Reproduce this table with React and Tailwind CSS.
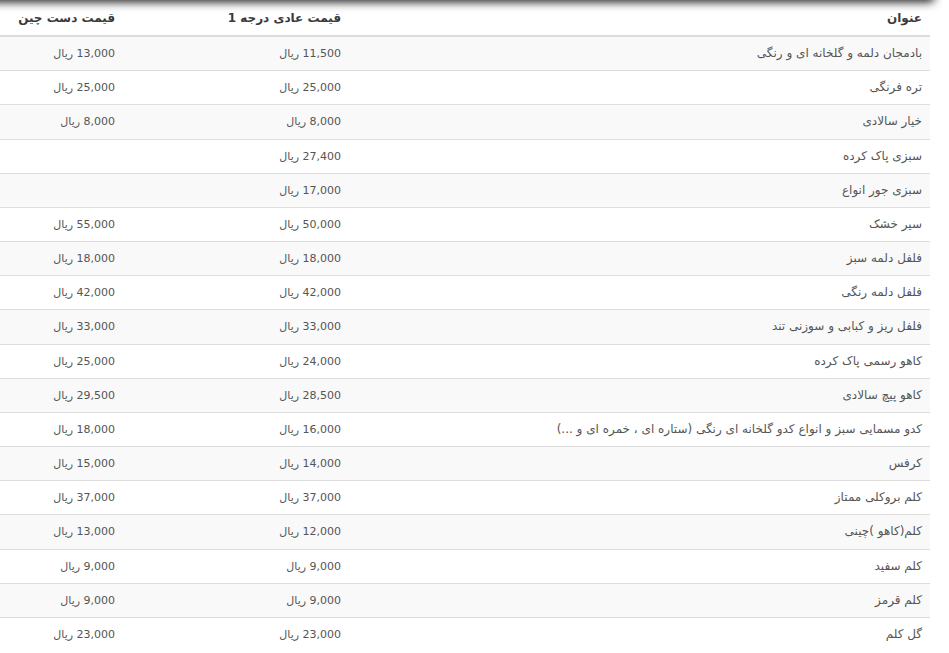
import React from "react";

const rows = [
  ["بادمجان دلمه و گلخانه ای و رنگی", "11,500", "13,000"],
  ["تره فرنگی", "25,000", "25,000"],
  ["خیار سالادی", "8,000", "8,000"],
  ["سبزی پاک کرده", "27,400", ""],
  ["سبزی جور انواع", "17,000", ""],
  ["سیر خشک", "50,000", "55,000"],
  ["فلفل دلمه سبز", "18,000", "18,000"],
  ["فلفل دلمه رنگی", "42,000", "42,000"],
  ["فلفل ریز و کبابی و سوزنی تند", "33,000", "33,000"],
  ["کاهو رسمی پاک کرده", "24,000", "25,000"],
  ["کاهو پیچ سالادی", "28,500", "29,500"],
  ["کدو مسمایی سبز و انواع کدو گلخانه ای رنگی (ستاره ای ، خمره ای و ...)", "16,000", "18,000"],
  ["کرفس", "14,000", "15,000"],
  ["کلم بروکلی ممتاز", "37,000", "37,000"],
  ["کلم(کاهو )چینی", "12,000", "13,000"],
  ["کلم سفید", "9,000", "9,000"],
  ["کلم قرمز", "9,000", "9,000"],
  ["گل کلم", "23,000", "23,000"],
];

function Price({ value }) {
  if (!value) return null;
  return <span className="text-[11px]">{value} ریال</span>;
}

export default function App() {
  return (
    <div className="relative w-[949px] h-[653px] overflow-hidden bg-white font-['DejaVu_Sans',sans-serif] text-[12px] text-[#555]">
      {/* shadow from the bar above */}
      <div className="absolute -top-[12px] left-[-20px] w-[955px] h-[12px] rounded-full shadow-[0_2px_10px_rgba(0,0,0,0.9)] bg-[#666]" />
      <table dir="rtl" className="w-[930px] border-collapse">
        <thead>
          <tr>
            <th className="text-right font-bold text-[#3a3a3a] px-2 pt-[10px] pb-2 leading-[17.15px] border-b-2 border-[#ddd]">عنوان</th>
            <th className="w-[226px] text-right font-bold text-[#3a3a3a] px-2 pt-[10px] pb-2 leading-[17.15px] border-b-2 border-[#ddd]">قیمت عادی درجه 1</th>
            <th className="w-[123px] text-right font-bold text-[#3a3a3a] px-2 pt-[10px] pb-2 leading-[17.15px] border-b-2 border-[#ddd]">قیمت دست چین</th>
          </tr>
        </thead>
        <tbody>
          {rows.map((r, i) => (
            <tr key={i} className={i % 2 === 0 ? "bg-[#f9f9f9]" : "bg-white"}>
              <td className="text-right px-2 py-2 leading-[17.15px] border-t border-[#ddd]">{r[0]}</td>
              <td className="text-right px-2 py-2 leading-[17.15px] border-t border-[#ddd]"><Price value={r[1]} /></td>
              <td className="text-right px-2 py-2 leading-[17.15px] border-t border-[#ddd]"><Price value={r[2]} /></td>
            </tr>
          ))}
        </tbody>
      </table>
    </div>
  );
}
